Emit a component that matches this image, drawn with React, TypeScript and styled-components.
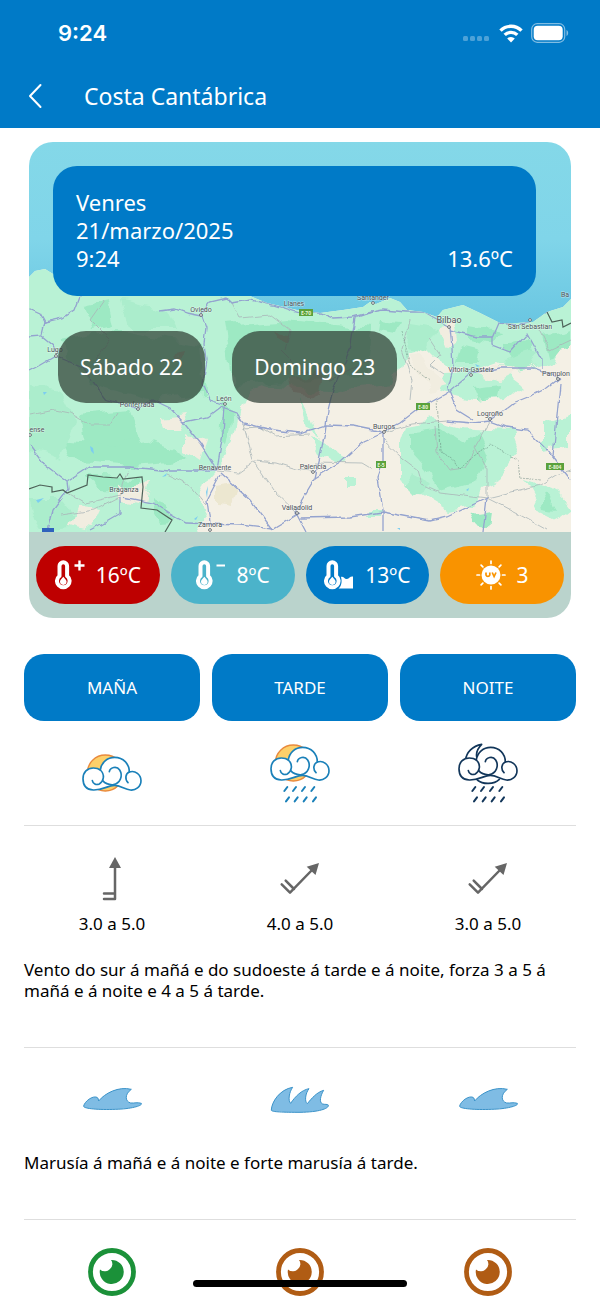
import React, { ReactElement } from 'react';
import styled, { createGlobalStyle } from 'styled-components';

const BLUE = '#007ac7';

const GlobalStyle = createGlobalStyle`
  * {
    box-sizing: border-box;
  }
  body {
    margin: 0;
    background: #fff;
    color: #000;
    font-family: 'Noto Sans', 'Open Sans', sans-serif;
    overflow-x: hidden;
  }
  button {
    font-family: inherit;
    border: 0;
    cursor: pointer;
  }
  svg {
    display: block;
  }
`;

const Header = styled.header`
  background: ${BLUE};
  color: #fff;
`;

const StatusBar = styled.div`
  display: flex;
  align-items: center;
  justify-content: space-between;
  height: 66px;
  padding: 0 31px 0 58px;
`;

const Clock = styled.span`
  font: 600 22px/28px Inter, sans-serif;
`;

const StatusIcons = styled.div`
  display: flex;
  align-items: center;
  gap: 8px;
`;

const NavBar = styled.div`
  display: flex;
  align-items: center;
  height: 62px;
  padding: 0 24px 2px;
  gap: 36px;
`;

const BackButton = styled.button`
  display: flex;
  align-items: center;
  width: 24px;
  height: 40px;
  padding: 0 4px;
  background: none;
  color: #fff;
`;

const Title = styled.h1`
  margin: 0;
  font-size: 23px;
  line-height: 28px;
  font-weight: 400;
`;

const ForecastCard = styled.section`
  position: relative;
  margin: 14px 29px 36px;
  border-radius: 24px;
  overflow: hidden;
  color: #fff;
`;

const MapBackdrop = styled.svg`
  position: absolute;
  inset: 0;
  width: 100%;
  height: 390px;
`;

const CardBody = styled.div`
  position: relative;
  height: 390px;
  padding: 24px 35px 0 24px;
`;

const CurrentPanel = styled.div`
  display: flex;
  align-items: flex-end;
  justify-content: space-between;
  padding: 22px 23px 24px;
  border-radius: 24px;
  background: ${BLUE};
  font-size: 22px;
  line-height: 28px;
`;

const DayList = styled.div`
  display: flex;
  gap: 27px;
  padding: 35px 5px 0;
`;

const DayButton = styled.button`
  height: 72px;
  padding: 0 22px;
  border-radius: 28px;
  background: rgba(47, 62, 53, 0.72);
  color: #fff;
  font-size: 21px;
  line-height: 28px;
`;

const Readings = styled.div`
  position: relative;
  display: grid;
  grid-template-columns: repeat(4, 1fr);
  gap: 11px;
  padding: 14px 7px;
  background: #bad3cc;
`;

const Reading = styled.div<{ $color: string }>`
  display: flex;
  align-items: center;
  justify-content: center;
  gap: 11px;
  height: 58px;
  border-radius: 29px;
  background: ${props => props.$color};
  font-size: 21px;
  line-height: 28px;
`;

const Content = styled.main`
  padding: 0 24px;
`;

const Columns = styled.div`
  display: grid;
  grid-template-columns: repeat(3, 1fr);
  column-gap: 12px;
  justify-items: center;
`;

const PeriodButton = styled.button`
  width: 100%;
  height: 67px;
  border-radius: 20px;
  background: ${BLUE};
  color: #fff;
  font-size: 17px;
`;

const Block = styled.section<{ $space: number }>`
  padding: ${props => props.$space}px 0;
  border-bottom: 1px solid #dedede;

  &:last-child {
    border-bottom: 0;
  }
`;

const Force = styled.span`
  display: block;
  font-size: 17px;
  line-height: 32px;
`;

const Description = styled.p<{ $top: number }>`
  margin: 0;
  padding: ${props => props.$top}px 24px 24px 0;
  font-size: 17px;
  line-height: 21px;
`;

const HomeIndicator = styled.div`
  position: fixed;
  left: 50%;
  bottom: 12px;
  width: 214px;
  height: 7px;
  margin-left: -107px;
  border-radius: 4px;
  background: #000;
`;

const cities: [string, number, number, number?][] = [
  ['Oviedo', 201, 312],
  ['Llanes', 294, 306],
  ['Santander', 373, 300],
  ['Bilbao', 449, 323, 9],
  ['San Sebastian', 530, 329],
  ['Ba', 565, 297],
  ['Lugo', 55, 352],
  ['Vitoria-Gasteiz', 471, 372],
  ['Pamplon', 556, 376],
  ['Ponferrada', 137, 407],
  ['León', 224, 401],
  ['Burgos', 384, 429],
  ['Logroño', 490, 416],
  ['ense', 37, 432],
  ['Benavente', 215, 470],
  ['Palencia', 313, 469],
  ['Braganza', 124, 492],
  ['Valladolid', 297, 510],
  ['Zamora', 210, 527],
];

const shields: [string, number, number][] = [
  ['E-70', 306, 312],
  ['E-80', 423, 406],
  ['E-5', 381, 464],
  ['E-804', 555, 466],
];

const roads = [
  '29,308 40,313 45,322 63,318 75,310 80,297',
  '45,322 42,335 29,336',
  '42,336 53,345 57,355 40,365 29,371',
  '57,357 83,368 97,387 107,400 137,408 153,400 170,408 183,422 200,443 217,470',
  '160,311 175,309 187,313 202,316',
  '202,313 210,302 227,298 232,303 250,300 273,305 300,313 320,313 333,318 353,317 372,312 383,310 407,312 423,312 433,318 450,327',
  '202,313 207,327 205,343 207,360 203,383 210,400 225,405',
  '183,422 207,417 220,407 237,413 243,423 273,430 300,433 327,425 353,426 383,432',
  '225,407 223,433 217,470',
  '30,445 45,465 67,482 68,490 53,510 48,530',
  '67,482 90,467 130,467 170,471 217,471',
  '220,475 207,500 210,523',
  '220,473 250,500 273,530',
  '90,530 103,523 120,513 120,497',
  '123,497 153,503 187,523 210,524 240,525 273,529 300,513',
  '383,433 363,442 340,463 315,478 300,503 296,513 306,532',
  '315,478 325,433 328,410 333,390 350,350 355,318 372,312',
  '383,433 383,463 378,477 383,510 383,532',
  '383,432 400,423 417,410 447,393 470,373 500,368 533,368 560,378',
  '447,421 473,423 490,421 507,427 527,430 547,450 571,480',
  '450,327 452,347 453,370 448,388 457,410 473,420',
  '490,421 513,403 533,395 547,388 560,378',
  '560,385 553,457',
  '300,518 350,517 383,512 430,521 447,517 487,498 483,532',
  '450,330 477,337 492,337 498,323',
  '492,337 492,345 510,352 527,333 542,360 542,368',
  '498,323 517,325 530,322 547,312 571,297',
];

const minorRoads = [
  '243,423 253,460 273,490 297,513',
  '217,471 238,473 255,461 277,463 300,470 313,471',
  '315,462 362,463 372,469',
  '383,440 402,458 418,470 422,484 440,492 487,498 540,485 556,475 571,470',
  '487,498 520,515 547,530',
  '490,421 475,447 487,470 487,498',
  '383,433 412,424 447,421',
  '167,474 190,485 207,505',
  '30,415 55,410 70,413 90,425 110,425 118,412',
  '68,493 85,503 100,500 120,495 128,470',
  '120,497 95,510 60,515',
  '104,300 90,320 110,340 95,360 120,372',
  '232,303 240,318 270,315 290,330 285,350',
  '410,320 402,350 412,380 410,400',
  '435,427 437,452 450,470 465,468 475,450',
  '280,350 300,370 330,380 370,360',
  '540,330 550,350 571,340',
  '430,340 440,355 430,365 445,375',
  '243,428 260,427 275,436 310,434',
];

const MapArt = (): ReactElement => (
  <MapBackdrop viewBox='29 142 542 390' preserveAspectRatio='xMidYMid slice' aria-label='Mapa'>
    <defs>
      <linearGradient id='sea' x1='0' y1='0' x2='0' y2='1'>
        <stop offset='0' stopColor='#84d8e8' />
        <stop offset='0.25' stopColor='#80d5e9' />
        <stop offset='0.48' stopColor='#68c5e1' />
      </linearGradient>
      <filter id='rough' x='-10%' y='-10%' width='120%' height='120%'>
        <feTurbulence type='fractalNoise' baseFrequency='0.05' numOctaves='2' seed='4' />
        <feDisplacementMap in='SourceGraphic' scale='18' xChannelSelector='R' yChannelSelector='G' />
      </filter>
      <filter id='wiggle'>
        <feTurbulence type='fractalNoise' baseFrequency='0.09' numOctaves='2' seed='9' />
        <feDisplacementMap in='SourceGraphic' scale='5' xChannelSelector='R' yChannelSelector='G' />
      </filter>
      <clipPath id='land'>
        <path d='M29 277L35 271L45 269L53 274L80 285L200 290L250 296L267 303L297 310L320 313L343 310L363 307L370 302L376 304L390 298L400 302L407 310L423 312L437 317L443 310L463 305L480 313L500 323L517 323L533 322L547 312L563 307L571 299V532H29Z' />
      </clipPath>
    </defs>
    <rect x='29' y='142' width='542' height='390' fill='url(#sea)' />
    <g clipPath='url(#land)'>
      <rect x='29' y='260' width='542' height='272' fill='#f4f0e5' />
      <g filter='url(#rough)'>
        <path fill='#b9f2d5' d='M10 250H590V340L560 345L555 362L520 372L498 362L470 372L440 360L425 345L405 350L395 385L340 392L270 385L252 392L240 410L234 440L222 462L208 478L200 500L205 518L185 550H10Z' />
        <g fill='#b9f2d5'>
          <path d='M400 440L405 425L430 420L470 430L512 432L520 455L500 480L480 490L475 505L450 510L400 480Z' />
          <path d='M445 372L500 370L520 385L505 398L470 400L440 392Z' />
          <path d='M545 425L571 415V445L545 450Z' />
          <path d='M525 480L555 490L570 510L560 518L540 508Z' />
          <path d='M310 438L330 445L350 455L335 465L318 455Z' />
          <path d='M300 395L312 420L320 440L308 428Z' />
          <path d='M343 480H354V489H343Z' />
          <path d='M366 506H380V514H366Z' />
        </g>
        <g fill='#9de9c3'>
          <path d='M60 340L120 330L200 345L205 395L150 400L90 385Z' />
          <path d='M225 325L290 320L370 330L365 375L300 380L235 385Z' />
          <path d='M85 305L110 300L115 325L95 330Z' />
          <path d='M80 415L130 410L140 440L120 455L85 450Z' />
          <path d='M60 440L110 445L150 440L180 450L190 460L130 465L70 460Z' />
          <path d='M88 477L140 478L140 490L100 488Z' />
          <path d='M410 432L440 428L465 445L480 432L490 455L475 480L440 490L428 470L410 450Z' />
          <path d='M470 515L490 512L488 527L475 525Z' />
          <path d='M470 325L500 330L490 345L470 340Z' />
          <path d='M505 345L530 340L535 355L510 360Z' />
          <path d='M460 345L480 350L478 362L455 362Z' />
          <path d='M545 335L571 330V350L550 355Z' />
          <path d='M470 388L500 385L498 398L475 400Z' />
          <path d='M543 493L552 498L558 508L546 506Z' />
          <path d='M380 320L400 322L395 335L378 332Z' />
          <path d='M150 500L170 505L175 520L160 522Z' />
          <path d='M222 402L234 415L228 445L220 440Z' />
        </g>
        <g fill='#abedcc'>
          <path d='M29 385L60 390L75 420L60 460L29 450Z' />
          <path d='M120 300L170 310L180 330L130 330Z' />
          <path d='M29 500L60 500L80 525L40 530Z' />
          <path d='M410 325L440 330L430 350L405 345Z' />
          <path d='M500 360L540 350L530 372L505 375Z' />
          <path d='M415 470L430 485L415 495L405 485Z' />
        </g>
        <g fill='#f1ede0'>
          <path d='M160 418L190 415L180 430L165 430Z' />
          <path d='M185 430L205 440L200 460L185 450Z' />
          <path d='M115 485L150 483L145 505L118 500Z' />
          <path d='M78 505L100 508L90 530L70 525Z' />
          <path d='M405 352L420 350L430 370L450 385L430 390L415 372Z' />
          <path d='M440 330L452 318L456 340L446 348Z' />
          <path d='M476 374L498 364L520 372L500 382Z' />
        </g>
        <path fill='#dccf9f' fillOpacity='0.3' d='M215 490L235 487L230 505L215 503Z' />
        <g fill='#d98a80' fillOpacity='0.4'>
          <path d='M272 330L290 332L288 340L275 338Z' />
          <path d='M290 380L325 370L320 395L292 392Z' />
          <path d='M170 352L182 350L180 360Z' />
        </g>
      </g>
      <g fill='#7ccdf0'>
        <path d='M90 446l3 2 1 6-3-3zM36 500l8-2-6 5zM162 477l5-4-1 3zM206 492l2-6-1 12zM194 519l4-3-2 4zM475 364l5 2-3 1zM43 392h4l-3 3zM397 528h3v2zM466 490l3-2-1 3z' />
      </g>
      <g fill='none' filter='url(#wiggle)'>
        {minorRoads.map(points => <polyline key={points} points={points} stroke='#a9b5b7' strokeWidth='0.8' />)}
        {roads.map(points => <polyline key={points} points={points} stroke='#94a3cf' strokeWidth='1.3' />)}
        <path stroke='#5f7d74' strokeWidth='0.8' strokeDasharray='2 1' opacity='0.6' d='M437 400L440 450L455 462L460 470L468 460L490 445L518 460L520 478L540 480M402 330L410 365L430 380' />
      </g>
      <g fill='none' stroke='#4e6259' strokeWidth='1.2'>
        <path d='M29 489L40 485L52 487V492L63 490L67 493L87 485L88 475L103 477L117 478L120 474L123 479L142 477L143 487L141 508L157 510L172 520L165 532' />
        <path d='M547 312L552 322L562 320L563 327L571 323' />
      </g>
    </g>
    {shields.map(([label, x, y]) => (
      <g key={label}>
        <rect x={x - label.length * 2 + 1} y={y - 3} width={label.length * 4 - 2} height='7' fill='#5aa13c' />
        <text x={x} y={y + 3} fontSize='5' fontWeight='700' fill='#e6f4d8' textAnchor='middle'>{label}</text>
      </g>
    ))}
    <rect x='42' y='528' width='12' height='4' fill='#2f62bd' />
    <g fontFamily='Roboto, sans-serif' fill='#4b5257' stroke='#fff' strokeOpacity='0.5' strokeWidth='1' paintOrder='stroke' textAnchor='middle'>
      {cities.map(([name, x, y, size]) => (
        <text key={name} x={x} y={y} fontSize={size || 7}>{name}</text>
      ))}
    </g>
    <g fill='#fff' stroke='#4b5257' strokeWidth='0.8'>
      {[[201, 315], [373, 303], [449, 327], [530, 320], [56, 356], [471, 375], [558, 379], [138, 409], [225, 404], [384, 432], [490, 419], [313, 472], [297, 513], [210, 530], [30, 435]].map(([x, y]) => (
        <circle key={`${x}-${y}`} cx={x} cy={y} r='1.4' />
      ))}
    </g>
  </MapBackdrop>
);

interface ThermometerProps {
  kind: 'max' | 'min' | 'water';
}

const Thermometer = ({ kind }: ThermometerProps): ReactElement => (
  <svg width='30' height='30' viewBox='0 0 30 30' fill='none' aria-hidden='true'>
    <path d='M4.5 6a3.8 3.8 0 0 1 7.600 0v10a6.300 6.300 0 1 1-7.600 0z' stroke='#fff' strokeWidth='4' strokeLinejoin='round' />
    <path d='M8.3 16.8c1.800 2.300 3.300 3.200 3.300 4.800a3.300 3.300 0 0 1-6.600 0c0-1.600 1.500-2.500 3.300-4.800z' fill='#fff' />
    {kind === 'max' && <path d='M19.500 5.500h10M24.500 0.500v10' stroke='#fff' strokeWidth='2.400' />}
    {kind === 'min' && <path d='M20.500 5.500h8.500' stroke='#fff' strokeWidth='2.200' />}
    {kind === 'water' && (
      <path d='M17 17c2.500-1 3.500 2.500 6 2s3-3 6-2.500v12H14.500c2.500-2 4-6 2.500-11.500z' fill='#fff' />
    )}
  </svg>
);

const UvSun = (): ReactElement => (
  <svg width='30' height='30' viewBox='0 0 30 30' aria-hidden='true'>
    <circle cx='15' cy='15' r='9.500' fill='#fff' />
    <g stroke='#fff' strokeWidth='1.700' strokeLinecap='round'>
      {[0, 45, 90, 135, 180, 225, 270, 315].map(angle => (
        <line key={angle} x1='15' y1='1' x2='15' y2='3.500' transform={`rotate(${angle} 15 15)`} />
      ))}
    </g>
    <path d='M10 12.500v2.600a2 2 0 0 0 3.800 0v-2.600M16.200 12.500l1.900 4 1.900-4' fill='none' stroke='#f99300' strokeWidth='1.700' />
  </svg>
);

const cloudBody = 'M34 108C12 107 3 92 3 74C3 54 16 42 34 42C42 42 50 44 55 48C58 25 76 10 98 10C124 10 142 30 142 54C160 48 177 62 177 80C177 98 160 110 145 108C128 106 115 94 97 94C78 94 62 109 34 108Z';

interface SkyIconProps {
  night?: boolean;
  rain?: boolean;
}

const SkyIcon = ({ night, rain }: SkyIconProps): ReactElement => {
  const line = night ? '#12365a' : '#1a80b9';
  return (
    <svg width='60' height='60' viewBox={rain ? '0 -3 180 180' : '0 -33 180 180'} fill='none' strokeLinecap='round' strokeLinejoin='round' aria-hidden='true'>
      {night
        ? <path d='M22 50C25 24 44 6 71 1C58 14 52 30 58 46M58 108C75 122 108 122 124 106' stroke={line} strokeWidth='5' />
        : <circle cx='70' cy='57' r='54' fill='#fdd06a' stroke='#e98a3d' strokeWidth='4' />}
      <path d={cloudBody} fill='#fff' stroke={line} strokeWidth='5' />
      <g stroke={line} strokeWidth='5'>
        <path d='M55 48C70 62 65 82 52 90C42 94 33 90 31 80' />
        <path d='M82 53C84 40 104 34 113 48C124 66 114 88 94 92C80 93 70 89 62 80' />
        <path d='M142 54C130 59 128 76 138 86' />
      </g>
      {rain && (
        <g stroke={line} strokeWidth='6'>
          {[45, 71, 98, 126].map(x => (
            <React.Fragment key={x}>
              <path d={`M${x - 2} 141l9 -12`} />
              <path d={`M${x + 3} 172l9 -12`} />
            </React.Fragment>
          ))}
        </g>
      )}
    </svg>
  );
};

interface WindIconProps {
  southwest?: boolean;
}

const WindIcon = ({ southwest }: WindIconProps): ReactElement => (
  <svg width='60' height='60' viewBox='0 0 60 60' fill='none' stroke='#666' strokeWidth='2.500' strokeLinecap='round' strokeLinejoin='round' aria-hidden='true'>
    {southwest ? (
      <>
        <path d='M11.700 36.300L20 44.700L43 21M15.700 32.700L24 41' />
        <path d='M36.700 18.700L49 15L45.500 27Z' fill='#666' stroke='none' />
      </>
    ) : (
      <>
        <path d='M22 51H33V18M22 45.500H33' />
        <path d='M33 9L27 20H39Z' fill='#666' stroke='none' />
      </>
    )}
  </svg>
);

interface WaveIconProps {
  strong?: boolean;
}

const WaveIcon = ({ strong }: WaveIconProps): ReactElement => (
  <svg width='60' height='60' viewBox='0 0 180 180' fill='#7fbce4' stroke='#3b93c9' strokeWidth='3' strokeLinejoin='round' aria-hidden='true'>
    {strong
      ? <path d='M4 120C5 95 30 58 68 52C58 65 53 92 62 100C75 80 95 60 117 56C106 70 103 95 112 101C125 85 140 67 161 61C152 75 146 98 158 102C165 104 171 102 175 105C178 115 150 126 90 127C40 127 2 126 4 120Z' />
      : <path d='M5 108C8 94 32 76 45 82C49 84 49 89 50 93C68 70 110 48 148 58C128 72 128 94 146 99C158 100 166 96 178 100C184 106 150 117 100 118C50 120 2 116 5 108Z' />}
  </svg>
);

interface EyeIconProps {
  color: string;
}

const EyeIcon = ({ color }: EyeIconProps): ReactElement => (
  <svg width='48' height='48' viewBox='0 0 48 48' aria-hidden='true'>
    <circle cx='24' cy='24' r='21.500' fill='#fff' stroke={color} strokeWidth='4.800' />
    <path d='M23 12A12 12 0 1 1 12 21.500A7 7 0 0 0 22 21A6.500 6.500 0 0 0 23 12Z' fill={color} />
  </svg>
);

const App = (): ReactElement => {
  return (
    <>
      <GlobalStyle />
      <Header>
        <StatusBar>
          <Clock>9:24</Clock>
          <StatusIcons>
            <svg width='28' height='20' viewBox='0 0 28 20' fill='#fff' fillOpacity='0.3' aria-hidden='true'>
              {[0, 7, 14, 21].map(x => <rect key={x} x={x} y='13' width='5' height='5' rx='1.500' />)}
            </svg>
            <svg width='24' height='20' viewBox='0 0 24 20' fill='none' stroke='#fff' strokeWidth='3.400' aria-hidden='true'>
              <path d='M1.500 7.600a15 15 0 0 1 21 0M5.700 11.900a9 9 0 0 1 12.600 0' />
              <path d='M12 19.500l-3.800-4a5.400 5.400 0 0 1 7.600 0z' fill='#fff' stroke='none' />
            </svg>
            <svg width='38' height='20' viewBox='0 0 38 20' fill='#fff' aria-hidden='true'>
              <rect x='0.700' y='0.700' width='33' height='18.600' rx='5.500' fill='none' stroke='#fff' strokeOpacity='0.5' strokeWidth='1.200' />
              <rect x='2.700' y='2.700' width='29' height='14.600' rx='4' />
              <path d='M35.500 7v6c2.200-1 2.200-5 0-6z' fillOpacity='0.5' />
            </svg>
          </StatusIcons>
        </StatusBar>
        <NavBar>
          <BackButton aria-label='Volver'>
            <svg width='14' height='26' viewBox='0 0 14 26' fill='none' stroke='#fff' strokeWidth='2' strokeLinecap='round' strokeLinejoin='round'>
              <path d='M12.500 2L2 13L12.500 24' />
            </svg>
          </BackButton>
          <Title>Costa Cantábrica</Title>
        </NavBar>
      </Header>
      <ForecastCard>
        <MapArt />
        <CardBody>
          <CurrentPanel>
            <div>
              <div>Venres</div>
              <div>21/marzo/2025</div>
              <div>9:24</div>
            </div>
            <div>13.6ºC</div>
          </CurrentPanel>
          <DayList>
            <DayButton>Sábado 22</DayButton>
            <DayButton>Domingo 23</DayButton>
          </DayList>
        </CardBody>
        <Readings>
          <Reading $color='#be0000'><Thermometer kind='max' />16ºC</Reading>
          <Reading $color='#4bb3ca'><Thermometer kind='min' />8ºC</Reading>
          <Reading $color={BLUE}><Thermometer kind='water' />13ºC</Reading>
          <Reading $color='#f99300'><UvSun />3</Reading>
        </Readings>
      </ForecastCard>
      <Content>
        <Columns>
          <PeriodButton>MAÑA</PeriodButton>
          <PeriodButton>TARDE</PeriodButton>
          <PeriodButton>NOITE</PeriodButton>
        </Columns>
        <Block $space={22}>
          <Columns>
            <SkyIcon />
            <SkyIcon rain />
            <SkyIcon night rain />
          </Columns>
        </Block>
        <Block $space={22}>
          <Columns>
            <WindIcon />
            <WindIcon southwest />
            <WindIcon southwest />
            <Force>3.0 a 5.0</Force>
            <Force>4.0 a 5.0</Force>
            <Force>3.0 a 5.0</Force>
          </Columns>
          <Description $top={19}>Vento do sur á mañá e do sudoeste á tarde e á noite, forza 3 a 5 á mañá e á noite e 4 a 5 á tarde.</Description>
        </Block>
        <Block $space={22}>
          <Columns>
            <WaveIcon />
            <WaveIcon strong />
            <WaveIcon />
          </Columns>
          <Description $top={22}>Marusía á mañá e á noite e forte marusía á tarde.</Description>
        </Block>
        <Block $space={28}>
          <Columns>
            <EyeIcon color='#1b9139' />
            <EyeIcon color='#b05c14' />
            <EyeIcon color='#b05c14' />
          </Columns>
        </Block>
      </Content>
      <HomeIndicator />
    </>
  );
};

export default App;
